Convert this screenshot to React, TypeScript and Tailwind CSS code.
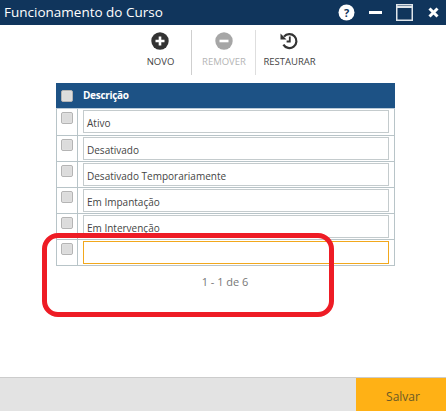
import React from 'react';

const rows = ['Ativo', 'Desativado', 'Desativado Temporariamente', 'Em Impantação', 'Em Intervenção', ''];

const Check = () => (
  <span className="block w-[12px] h-[12px] rounded-[2px] bg-[#dcdcdc] border border-[#b4b4b4] shadow-[inset_0_0_1px_#fff]" />
);

const App: React.FC = () => {
  return (
    <div className="relative w-[446px] h-[411px] bg-white flex flex-col overflow-hidden font-['Open_Sans',sans-serif]">
      {/* Title bar */}
      <div className="h-[25px] bg-[#10355c] flex items-center text-white">
        <div className="flex-1 pl-[4px] text-[13.5px]">Funcionamento do Curso</div>
        <svg width="17" height="17" viewBox="0 0 17 17" className="mr-[14px]">
          <circle cx="8.5" cy="8.5" r="8" fill="#fff" />
          <text x="8.5" y="12.5" textAnchor="middle" fontSize="11" fontWeight="700" fill="#10355c" fontFamily="Open Sans">?</text>
        </svg>
        <span className="block w-[13px] h-[3px] bg-white mr-[14px]" />
        <svg width="17" height="17" viewBox="0 0 17 17" className="mr-[15px]">
          <rect x="0.75" y="0.75" width="15.5" height="15.5" fill="none" stroke="#dfe5ea" strokeWidth="1.5" />
          <rect x="1" y="2" width="15" height="2" fill="#dfe5ea" />
        </svg>
        <svg width="11" height="11" viewBox="0 0 11 11" className="mr-[7px]">
          <path d="M1.5 1.5l8 8M9.5 1.5l-8 8" stroke="#fff" strokeWidth="3" />
        </svg>
      </div>

      {/* Toolbar */}
      <div className="h-[58px] flex pl-[136px]">
        <div className="flex h-[45px] mt-[5px]">
          <div className="w-[55px] pr-[6px] flex flex-col items-center">
            <svg width="18" height="18" viewBox="0 0 18 18" className="mt-[2px] mr-[2px]">
              <circle cx="9" cy="9" r="8.7" fill="#333" />
              <path d="M9 4.5v9M4.5 9h9" stroke="#fff" strokeWidth="2.6" />
            </svg>
            <span className="mt-[5px] text-[9.5px] leading-[14px] text-[#444]">NOVO</span>
          </div>
          <div className="w-[1px] bg-[#cfcfcf] mr-[6px]" />
          <div className="w-[52px] flex flex-col items-center">
            <svg width="18" height="18" viewBox="0 0 18 18" className="mt-[2px]">
              <circle cx="9" cy="9" r="8.7" fill="#a6a6a6" />
              <path d="M4.5 9h9" stroke="#fff" strokeWidth="2.6" />
            </svg>
            <span className="mt-[5px] text-[9.5px] leading-[14px] text-[#b5b5b5]">REMOVER</span>
          </div>
          <div className="w-[1px] bg-[#dedede] ml-[5px] mr-[6px]" />
          <div className="w-[55px] flex flex-col items-center">
            <svg width="18" height="18" viewBox="0 0 18 18" className="mt-[2px] mr-[2px]" fill="none">
              <path d="M4 4.6A7 7 0 1 1 3.4 12.6" stroke="#333" strokeWidth="2.2" />
              <path d="M0.5 1.5L6.5 7.5H0.5Z" fill="#333" />
              <path d="M9.8 4.5v5H6.6" stroke="#333" strokeWidth="1.8" />
            </svg>
            <span className="mt-[5px] text-[9.5px] leading-[14px] text-[#444] whitespace-nowrap">RESTAURAR</span>
          </div>
        </div>
      </div>

      {/* Grid */}
      <div className="ml-[56px] w-[339px]">
        <div className="h-[26px] bg-[#1d5285] border-b border-[#b9c9d6] flex items-center">
          <div className="w-[22px] flex justify-center">
            <Check />
          </div>
          <span className="ml-[5px] text-[10px] tracking-[-0.3px] font-bold text-white">Descrição</span>
        </div>
        <div className="border-l border-r border-b border-[#b8c4c8]">
          {rows.map((r, i) => (
            <div key={i} className={`h-[26px] flex ${i > 0 ? 'border-t border-[#b8c4c8]' : ''}`}>
              <div className="w-[21px] border-r border-[#b8c4c8] flex justify-center pt-[3px]">
                <Check />
              </div>
              <div className="flex-1 pl-[5px] pr-[5px] py-[1px]">
                <div
                  className={`h-[23px] border pl-[3px] text-[10px] leading-[24px] text-[#444] ${
                    i === rows.length - 1 ? 'border-[#f2a81d]' : 'border-[#c4cbcd]'
                  }`}
                >
                  {r}
                </div>
              </div>
            </div>
          ))}
        </div>
        <div className="mt-[9px] text-center text-[11px] leading-[14px] text-[#777] pr-[1px]">1 - 1 de 6</div>
      </div>

      {/* Footer */}
      <div className="mt-auto h-[34px] bg-[#e3e3e3] border-t border-[#cccccc] flex justify-end">
        <div className="w-[90px] bg-[#ffb115] flex items-center justify-center text-[12px] text-[#6b5a26] pt-[5px] pl-[4px]">
          Salvar
        </div>
      </div>

      {/* Red annotation */}
      <div className="absolute left-[42px] top-[233px] w-[292px] h-[84px] border-[5px] border-[#ee1c25] rounded-[16px]" />
    </div>
  );
};

export default App;
